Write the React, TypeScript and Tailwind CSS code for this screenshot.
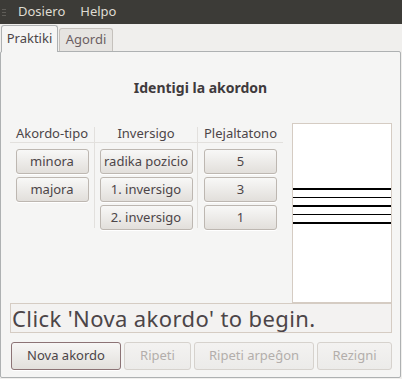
import { ReactNode } from 'react'

const font = { fontFamily: '"Noto Sans", "Open Sans", sans-serif' }

function Btn({ children, w, disabled, focused }: { children: ReactNode; w: string; disabled?: boolean; focused?: boolean }) {
  return (
    <div
      className={`${w} flex items-center justify-center rounded-[3px] border bg-gradient-to-b text-[13px] ${
        disabled
          ? 'border-[#d6d2cd] from-[#f3f2f1] to-[#ecebe9] text-[#b3aeab]'
          : focused
          ? 'border-[#8c7375] from-[#f7f6f5] to-[#e2e0dc] text-[#4c4548] shadow-[0_1px_0_#fff]'
          : 'border-[#bdb7b1] from-[#f8f8f7] to-[#e2dfdb] text-[#4c4548] shadow-[0_1px_0_#fff]'
      }`}
    >
      {children}
    </div>
  )
}

function Column({ title, items, bw, w, first }: { title: string; items: string[]; bw: string; w: string; first?: boolean }) {
  return (
    <div className={`${w} h-[101px] ${first ? '' : 'border-l border-[#e2e0dd]'}`}>
      <div className="flex h-[16px] items-center justify-center border-b border-[#e2e0dd] pb-[2px] text-[13px] text-[#4c4548]">
        {title}
      </div>
      <div className="flex flex-col items-center gap-[3px] pt-[6px]">
        {items.map((t) => (
          <Btn key={t} w={`${bw} h-[25px]`}>
            {t}
          </Btn>
        ))}
      </div>
    </div>
  )
}

export default function App() {
  return (
    <div className="flex h-[379px] w-[402px] flex-col bg-[#f0efed]" style={font}>
      <div className="flex h-[24px] items-center bg-[#3c3b37] text-[13px] text-[#dfdbd2]">
        <div className="ml-[2px] flex w-[4px] flex-col gap-[2px]">
          <div className="h-px bg-[#5f5d58]" />
          <div className="h-px bg-[#5f5d58]" />
          <div className="h-px bg-[#5f5d58]" />
        </div>
        <span className="ml-[12px]">Dosiero</span>
        <span className="ml-[15px]">Helpo</span>
      </div>
      <div className="flex h-[27px] items-end pl-[1px]">
        <div className="relative z-10 -mb-px flex h-[27px] w-[57px] items-center justify-center rounded-t-[3px] border border-b-0 border-[#aeb1b2] bg-[#f5f5f4] pb-[1px] text-[13px] text-[#4c4548]">
          Praktiki
        </div>
        <div className="ml-[1px] flex h-[23px] w-[54px] items-center justify-center rounded-t-[3px] border border-b-0 border-[#c5c1bc] bg-[#e6e4e1] text-[13px] text-[#6b5e62]">
          Agordi
        </div>
      </div>
      <div className="mr-[1px] flex h-[327px] flex-col rounded-[2px] border border-[#aeb1b2] bg-[#f5f5f4]">
        <div className="mt-[27px] text-center text-[14px] font-bold leading-[18px] text-[#3f3a3c]">Identigi la akordon</div>
        <div className="ml-[9px] mt-[26px] flex gap-[9px]">
          <div className="flex w-[273px] pt-[4px]">
            <Column first w="w-[84px]" bw="w-[73px]" title="Akordo-tipo" items={['minora', 'majora']} />
            <Column w="w-[103px]" bw="w-[93px]" title="Inversigo" items={['radika pozicio', '1. inversigo', '2. inversigo']} />
            <Column w="w-[86px]" bw="w-[73px]" title="Plejaltatono" items={['5', '3', '1']} />
          </div>
          <div className="flex h-[180px] w-[100px] flex-col border border-[#d5ccc3] bg-white pt-[64px]">
            <div className="flex flex-col gap-[7px]">
              <div className="h-[1.5px] bg-black" />
              <div className="h-[1.5px] bg-black" />
              <div className="h-[1.5px] bg-black" />
              <div className="h-[1.5px] bg-black" />
              <div className="h-[1.5px] bg-black" />
            </div>
          </div>
        </div>
        <div className="ml-[9px] flex h-[30px] w-[382px] items-center border border-[#d5ccc3] bg-[#f3f2f1] pl-[1px] text-[22px] tracking-[0.4px] text-[#4c4548]">
          Click 'Nova akordo' to begin.
        </div>
        <div className="ml-[10px] mt-[9px] flex gap-[3px]">
          <Btn focused w="w-[110px] h-[28px]">Nova akordo</Btn>
          <Btn disabled w="w-[67px] h-[28px]">Ripeti</Btn>
          <Btn disabled w="w-[120px] h-[28px]">Ripeti arpeĝon</Btn>
          <Btn disabled w="w-[75px] h-[28px]">Rezigni</Btn>
        </div>
      </div>
    </div>
  )
}
